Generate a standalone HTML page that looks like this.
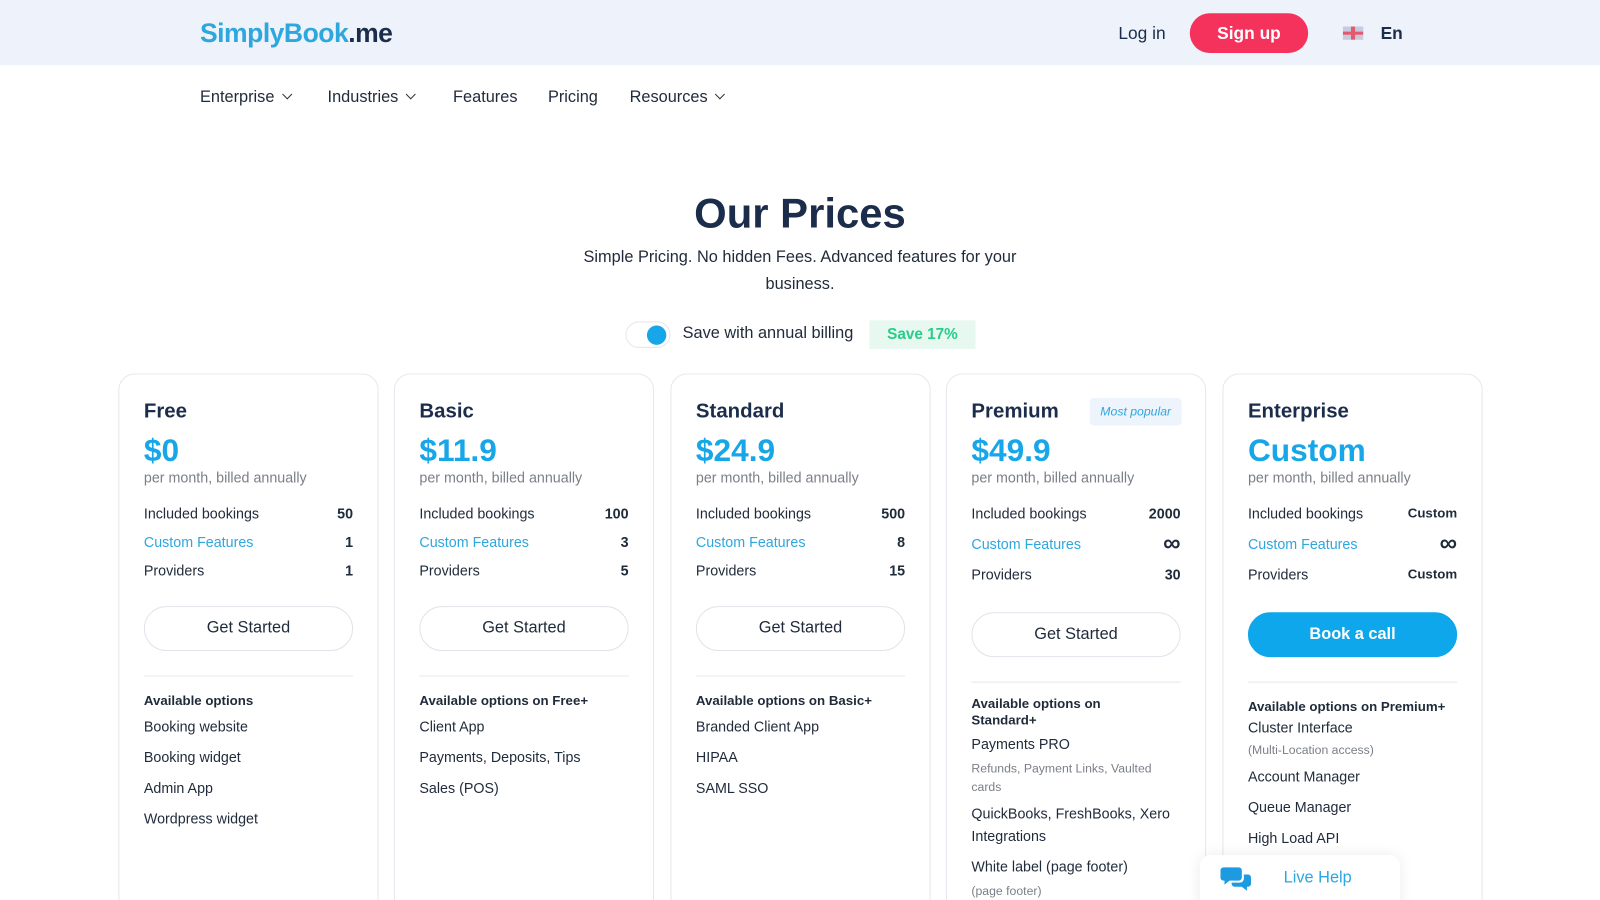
<!DOCTYPE html>
<html><head><meta charset="utf-8"><style>
*{box-sizing:border-box;margin:0;padding:0}
html,body{width:1600px;height:900px;overflow:hidden}
body{background:#fff;font-family:"Liberation Sans",sans-serif;color:#1f2a3a;position:relative}
#w{position:absolute;left:0;top:0;width:1568px;height:882px;overflow:hidden;transform:scale(1.0204);transform-origin:0 0}
.top{height:64px;background:#eef3fb;position:relative}
.logo{position:absolute;left:196px;top:17px;font-size:26px;font-weight:bold;color:#2ea6de;letter-spacing:-0.5px}
.logo span{color:#1b2d4a}
.login{position:absolute;left:1096px;top:23px;font-size:17px;color:#1b2d4a}
.signup{position:absolute;left:1166px;top:13px;width:116px;height:39px;border-radius:20px;background:#f5325c;color:#fff;font-size:17px;font-weight:bold;text-align:center;line-height:39px}
.flag{position:absolute;left:1316px;top:26px;width:20px;height:13px;background:#c8cbe0;overflow:hidden}
.flag:before{content:"";position:absolute;left:8px;top:0;width:4px;height:13px;background:#e45a6c}
.flag:after{content:"";position:absolute;left:0;top:5px;width:20px;height:3px;background:#e45a6c}
.en{position:absolute;left:1353px;top:23px;font-size:17px;font-weight:bold;color:#1b2d4a}
.nav{position:absolute;top:87px;left:196px;font-size:16px;color:#1f2a3a}
.nav span{position:absolute;white-space:nowrap}
.chev{display:inline-block;width:7px;height:7px;border-right:1.5px solid #333;border-bottom:1.5px solid #333;transform:rotate(45deg);margin-left:9px;position:relative;top:-4px}
h1{position:absolute;top:186px;width:100%;text-align:center;font-size:41px;color:#1b2d4a}
.sub{position:absolute;top:240px;left:550px;width:468px;text-align:center;font-size:16px;line-height:26px}
.tog{position:absolute;left:613px;top:315px;width:44px;height:26px;border-radius:13px;border:1px solid #e4e8ee;background:#fff}
.tog:after{content:"";position:absolute;right:3px;top:3px;width:19px;height:19px;border-radius:50%;background:#17a6e8}
.togl{position:absolute;left:669px;top:318px;font-size:16px}
.save{position:absolute;left:852px;top:314px;width:104px;height:28px;background:#e6f8f0;color:#2bcb8a;font-weight:bold;font-size:15px;text-align:center;line-height:28px}
.card{position:absolute;top:366px;width:255px;height:560px;border:1px solid #e4e8ee;border-radius:16px;padding:24px 24px 0}
.t{font-size:20px;font-weight:bold;line-height:24px;color:#1b2d4a}
.p{margin-top:10px;font-size:31px;font-weight:bold;line-height:34px;color:#17a6e8}
.pm{font-size:14px;line-height:18px;color:#7a7f88}
.rows{margin-top:12px}
.r{display:flex;justify-content:space-between;font-size:14px;height:28px;line-height:28px}
.r b{font-size:14px}
.r.c{color:#2ea6de}.r.c b{color:#1f2a3a}
.r.i{height:32px;line-height:32px}
.r.i b{font-size:24px}
.btn{margin-top:21px;height:44px;border:1px solid #e0e4ea;border-radius:22px;text-align:center;line-height:42px;font-size:16px}
.btn.b{background:#0ea7ec;border-color:#0ea7ec;color:#fff;font-weight:bold}
.hr{margin-top:24px;border-top:1px solid #e4e8ee}
.h{margin-top:15px;font-size:13px;font-weight:bold;line-height:17px}
.it{font-size:14px;line-height:30px}
.sm{font-size:12px;color:#7a7f88;line-height:18px}
.lh{position:absolute;left:1176px;top:838px;width:196px;height:70px;background:#fff;border-radius:10px;box-shadow:0 0 14px rgba(0,0,0,.08)}
.lh span{position:absolute;left:82px;top:14px;font-size:16px;color:#2ea6de}
</style></head><body><div id="w">
<div class="top">
<div class="logo">SimplyBook<span>.me</span></div>
<div class="login">Log in</div>
<div class="signup">Sign up</div>
<div class="flag"></div>
<div class="en">En</div>
</div>
<div class="nav">
<span style="left:0">Enterprise<i class="chev"></i></span>
<span style="left:125px">Industries<i class="chev"></i></span>
<span style="left:248px">Features</span>
<span style="left:341px">Pricing</span>
<span style="left:421px">Resources<i class="chev"></i></span>
</div>
<h1>Our Prices</h1>
<div class="sub">Simple Pricing. No hidden Fees. Advanced features for your business.</div>
<div class="tog"></div>
<div class="togl">Save with annual billing</div>
<div class="save">Save 17%</div>

<div class="card" style="left:116px">
<div class="t">Free</div><div class="p">$0</div><div class="pm">per month, billed annually</div>
<div class="rows"><div class="r"><span>Included bookings</span><b>50</b></div><div class="r c"><span>Custom Features</span><b>1</b></div><div class="r"><span>Providers</span><b>1</b></div></div>
<div class="btn">Get Started</div><div class="hr"></div>
<div class="h">Available options</div>
<div style="margin-top:2px"><div class="it">Booking website</div><div class="it">Booking widget</div><div class="it">Admin App</div><div class="it">Wordpress widget</div></div>
</div>

<div class="card" style="left:386px">
<div class="t">Basic</div><div class="p">$11.9</div><div class="pm">per month, billed annually</div>
<div class="rows"><div class="r"><span>Included bookings</span><b>100</b></div><div class="r c"><span>Custom Features</span><b>3</b></div><div class="r"><span>Providers</span><b>5</b></div></div>
<div class="btn">Get Started</div><div class="hr"></div>
<div class="h">Available options on Free+</div>
<div style="margin-top:2px"><div class="it">Client App</div><div class="it">Payments, Deposits, Tips</div><div class="it">Sales (POS)</div></div>
</div>

<div class="card" style="left:657px">
<div class="t">Standard</div><div class="p">$24.9</div><div class="pm">per month, billed annually</div>
<div class="rows"><div class="r"><span>Included bookings</span><b>500</b></div><div class="r c"><span>Custom Features</span><b>8</b></div><div class="r"><span>Providers</span><b>15</b></div></div>
<div class="btn">Get Started</div><div class="hr"></div>
<div class="h">Available options on Basic+</div>
<div style="margin-top:2px"><div class="it">Branded Client App</div><div class="it">HIPAA</div><div class="it">SAML SSO</div></div>
</div>

<div class="card" style="left:927px">
<div style="position:absolute;left:140px;top:23px;width:90px;height:27px;background:#eef4fb;border-radius:4px;font-size:12px;font-style:italic;color:#2ea6de;text-align:center;line-height:27px">Most popular</div>
<div class="t">Premium</div><div class="p">$49.9</div><div class="pm">per month, billed annually</div>
<div class="rows"><div class="r"><span>Included bookings</span><b>2000</b></div><div class="r c i"><span>Custom Features</span><b>∞</b></div><div class="r"><span>Providers</span><b>30</b></div></div>
<div class="btn" style="margin-top:23px">Get Started</div><div class="hr"></div>
<div class="h" style="margin-top:13px;line-height:16px">Available options on<br>Standard+</div>
<div style="margin-top:0"><div class="it">Payments PRO</div><div class="sm">Refunds, Payment Links, Vaulted cards</div><div class="it" style="line-height:22px;margin-top:6px">QuickBooks, FreshBooks, Xero Integrations</div><div class="it" style="margin-top:4px">White label (page footer)</div><div class="sm">(page footer)</div></div>
</div>

<div class="card" style="left:1198px">
<div class="t">Enterprise</div><div class="p">Custom</div><div class="pm">per month, billed annually</div>
<div class="rows"><div class="r"><span>Included bookings</span><b style="font-size:13px">Custom</b></div><div class="r c i"><span>Custom Features</span><b>∞</b></div><div class="r"><span>Providers</span><b style="font-size:13px">Custom</b></div></div>
<div class="btn b" style="margin-top:23px">Book a call</div><div class="hr"></div>
<div class="h">Available options on Premium+</div>
<div style="margin-top:-1px"><div class="it" style="line-height:26px">Cluster Interface</div><div class="sm">(Multi-Location access)</div><div class="it" style="margin-top:2px">Account Manager</div><div class="it">Queue Manager</div><div class="it">High Load API</div></div>
</div>

<div class="lh">
<svg style="position:absolute;left:20px;top:11px" width="30" height="26" viewBox="0 0 30 26"><path d="M3 1h15a3 3 0 0 1 3 3v7a3 3 0 0 1-3 3H9l-5 4v-4H3a3 3 0 0 1-3-3V4a3 3 0 0 1 3-3z" fill="#1e9be0"/><path d="M23 8h4a3 3 0 0 1 3 3v6a3 3 0 0 1-3 3h-1v4l-5-4h-7a3 3 0 0 1-3-3v-1h8a4 4 0 0 0 4-4z" fill="#1e9be0"/></svg>
<span>Live Help</span></div>
</div></body></html>
